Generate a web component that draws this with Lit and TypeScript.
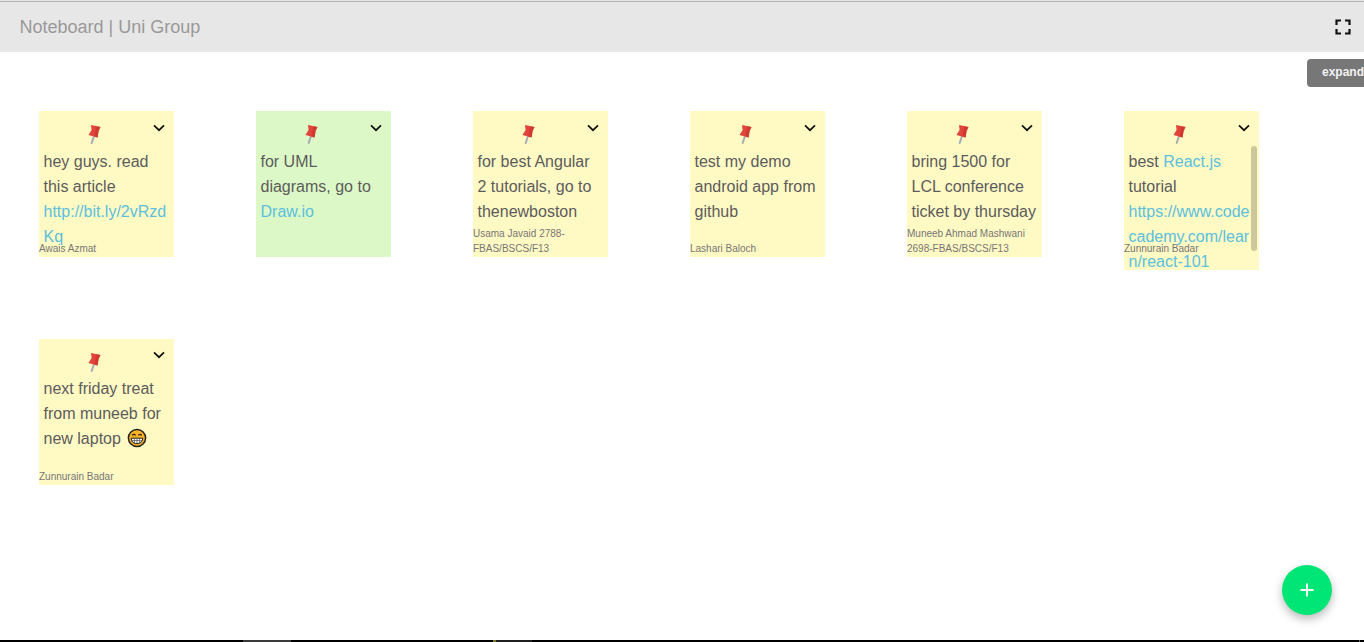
import { LitElement, html, css, svg } from "lit";
import { customElement } from "lit/decorators.js";

type Part = string | { link: string; block?: boolean };

interface Note {
  parts: Part[];
  author: string;
  green?: boolean;
  grin?: boolean;
  scroll?: boolean;
}

const NOTES: Note[] = [
  { parts: ["hey guys. read this article ", { link: "http://bit.ly/2vRzdKq", block: true }], author: "Awais Azmat" },
  { parts: ["for UML diagrams, go to ", { link: "Draw.io" }], author: "", green: true },
  { parts: ["for best Angular 2 tutorials, go to thenewboston"], author: "Usama Javaid 2788-FBAS/BSCS/F13" },
  { parts: ["test my demo android app from github"], author: "Lashari Baloch" },
  { parts: ["bring 1500 for LCL conference ticket by thursday"], author: "Muneeb Ahmad Mashwani 2698-FBAS/BSCS/F13" },
  {
    parts: ["best ", { link: "React.js" }, " tutorial ", { link: "https://www.codecademy.com/learn/react-101", block: true }],
    author: "Zunnurain Badar",
    scroll: true,
  },
  { parts: ["next friday treat from muneeb for new laptop "], author: "Zunnurain Badar", grin: true },
];

const pin = svg`<svg class="pin" viewBox="0 0 22 24" width="22" height="24">
  <path d="M10 14 L7.7 21" stroke="#a3adb3" stroke-width="2" stroke-linecap="round" fill="none"/>
  <path d="M7 3 L16.5 5 L14.6 9 L13.6 15.6 L4.5 13 L7.6 8 Z" fill="#e0443a"/>
  <path d="M12.5 4.2 L16.5 5 L14.6 9 L13.6 15.6 L10.5 14.7 L11.6 8.5 Z" fill="#c53029" opacity=".6"/>
</svg>`;

const grin = svg`<svg class="grin" viewBox="0 0 20 20" width="20" height="20">
  <circle cx="10" cy="10" r="8.6" fill="#fbb227" stroke="#222" stroke-width="1.5"/>
  <path d="M5.2 7.4 q1.8 -2 3.4 0 M11.4 7.4 q1.8 -2 3.4 0" stroke="#222" stroke-width="1.2" fill="none"/>
  <path d="M4.2 10.2 H15.8 Q15.6 15.6 10 15.6 Q4.4 15.6 4.2 10.2 Z" fill="#fff" stroke="#222" stroke-width="1"/>
  <path d="M4.6 12.6 H15.4 M7.4 10.4 V15.2 M10 10.4 V15.5 M12.6 10.4 V15.2" stroke="#555" stroke-width=".8"/>
</svg>`;

@customElement("app-root")
export class AppRoot extends LitElement {
  static styles = css`
    :host {
      display: block;
      position: relative;
      width: 1364px;
      height: 642px;
      overflow: hidden;
      background: #fff;
      font-family: "Liberation Sans", Arial, sans-serif;
    }
    .bar {
      display: flex;
      align-items: center;
      justify-content: space-between;
      box-sizing: border-box;
      height: 52px;
      padding: 1px 13.5px 0 19.5px;
      background: #e7e7e7;
      border-top: 1px solid #e4e4e4;
      box-shadow: inset 0 1px #b4b4b4;
    }
    .title {
      font-size: 18px;
      color: #999;
    }
    .fs {
      display: block;
      width: 16px;
      height: 16px;
      margin-top: -1px;
    }
    .board {
      display: flex;
      flex-wrap: wrap;
      align-items: flex-start;
      gap: 69px 82px;
      padding: 59px 0 0 39px;
    }
    .note {
      position: relative;
      box-sizing: border-box;
      width: 135px;
      min-height: 146px;
      background: #fff9c4;
    }
    .note.green {
      background: #dcf8c6;
    }
    .head {
      position: relative;
      height: 37.6px;
    }
    .pin {
      position: absolute;
      left: 45px;
      top: 11px;
    }
    .chev {
      position: absolute;
      right: 9px;
      top: 12.5px;
      width: 12px;
      height: 8px;
    }
    .body {
      margin: 0 0 -4px;
      padding: 0 5.5px 0 4.5px;
      font-size: 16px;
      line-height: 25px;
      color: #5c5c5c;
    }
    .body a {
      color: #5bc0de;
      text-decoration: none;
    }
    .body a.block {
      display: block;
      word-break: break-all;
    }
    .scroll .body {
      padding-right: 8.5px;
    }
    .grin {
      margin-left: 2px;
      vertical-align: -4px;
    }
    .author {
      position: absolute;
      left: 0;
      right: 0;
      top: 99px;
      height: 46px;
      display: flex;
      align-items: flex-end;
      font-size: 10px;
      line-height: 15px;
      color: #777;
    }
    .thumb {
      position: absolute;
      left: 127px;
      top: 35px;
      width: 6px;
      height: 105px;
      border-radius: 3px;
      background: #cdc89c;
    }
    .tip {
      position: absolute;
      left: 1307px;
      top: 59px;
      box-sizing: border-box;
      width: 80px;
      height: 28px;
      padding-left: 15px;
      border-radius: 4px;
      background: #777;
      color: #f2f2f2;
      font-size: 12px;
      font-weight: bold;
      line-height: 27px;
    }
    .fab {
      position: absolute;
      left: 1282px;
      top: 565px;
      display: flex;
      align-items: center;
      justify-content: center;
      width: 50px;
      height: 50px;
      border-radius: 50%;
      background: #00e676;
      box-shadow: 0 4px 10px rgba(0, 0, 0, 0.28);
    }
    .strip {
      position: absolute;
      left: 0;
      right: 0;
      bottom: 0;
      height: 2px;
      background: #000;
    }
    .strip i {
      position: absolute;
      top: 0;
      height: 2px;
    }
    .s1 { left: 243px; width: 48px; background: #3a3a3a; }
    .s2 { left: 493px; width: 3px; background: #77772a; }
    .s3 { left: 496px; width: 36px; background: #1f1f1f; }
    .s4 { left: 1359px; width: 1px; background: #666; }
  `;

  renderPart(p: Part) {
    if (typeof p === "string") return p;
    return html`<a class=${p.block ? "block" : ""}>${p.link}</a>`;
  }

  renderNote(n: Note) {
    const cls = "note" + (n.green ? " green" : "") + (n.scroll ? " scroll" : "");
    return html`<div class=${cls}>
      <div class="head">
        ${pin}
        <svg class="chev" viewBox="0 0 12 8">
          <path d="M1 1.4 L6 6.2 L11 1.4" stroke="#111" stroke-width="1.7" fill="none" />
        </svg>
      </div>
      <p class="body">${n.parts.map((p) => this.renderPart(p))}${n.grin ? grin : ""}</p>
      ${n.author ? html`<div class="author"><span>${n.author}</span></div>` : ""}
      ${n.scroll ? html`<div class="thumb"></div>` : ""}
    </div>`;
  }

  render() {
    return html`
      <header class="bar">
        <span class="title">Noteboard | Uni Group</span>
        <svg class="fs" viewBox="0 0 16 16">
          <path d="M1.5 6 V1.5 H6 M10 1.5 H14.5 V6 M14.5 10 V14.5 H10 M6 14.5 H1.5 V10" stroke="#111" stroke-width="2.2" fill="none" />
        </svg>
      </header>
      <main class="board">${NOTES.map((n) => this.renderNote(n))}</main>
      <div class="tip">expand</div>
      <div class="fab">
        <svg viewBox="0 0 14 14" width="14" height="14">
          <path d="M7 0.5 V13.5 M0.5 7 H13.5" stroke="#fff" stroke-width="2" />
        </svg>
      </div>
      <div class="strip"><i class="s1"></i><i class="s2"></i><i class="s3"></i><i class="s4"></i></div>
    `;
  }
}
